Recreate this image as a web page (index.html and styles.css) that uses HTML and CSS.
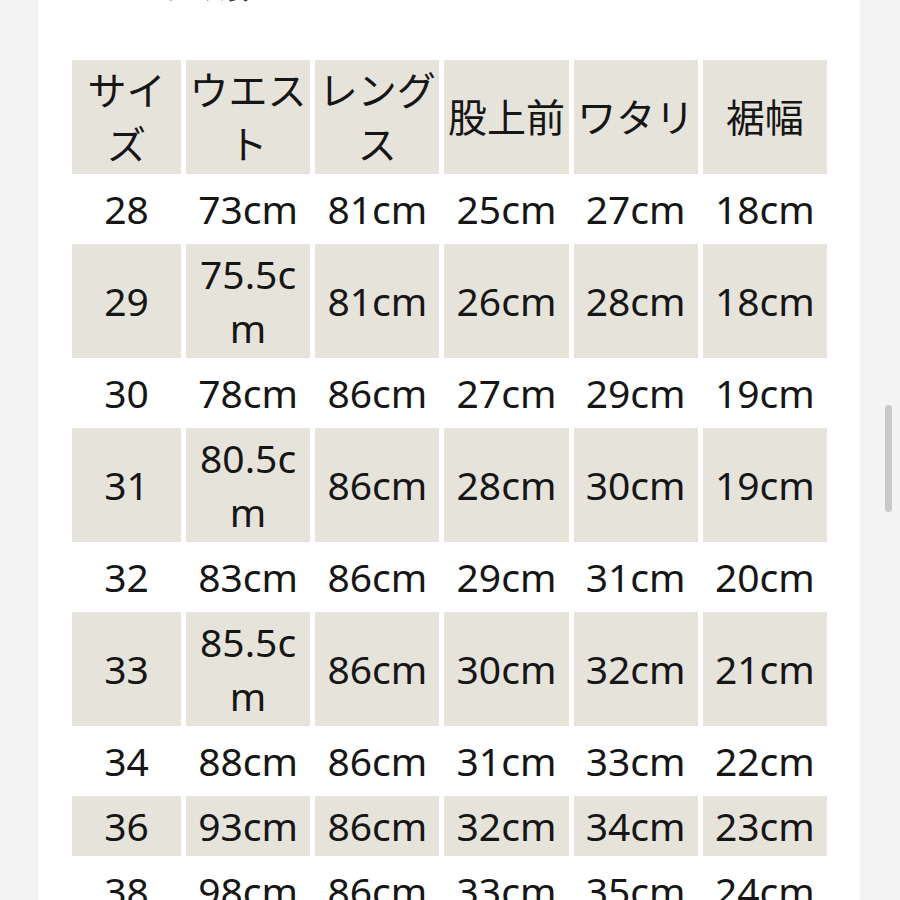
FILE: index.html
```html
<!DOCTYPE html>
<html lang="ja">
<head>
<meta charset="utf-8">
<link rel="stylesheet" href="styles.css">
</head>
<body>
<div class="card">
  <h2 class="heading">サイズ表</h2>
  <table class="size-table">
    <colgroup>
      <col class="col-size">
      <col class="col-wide"><col class="col-wide"><col class="col-wide"><col class="col-wide"><col class="col-wide">
    </colgroup>
    <thead>
      <tr class="shaded"><th>サイズ</th><th>ウエスト</th><th>レングス</th><th>股上前</th><th>ワタリ</th><th>裾幅</th></tr>
    </thead>
    <tbody>
      <tr><td>28</td><td>73cm</td><td>81cm</td><td>25cm</td><td>27cm</td><td>18cm</td></tr>
      <tr class="shaded"><td>29</td><td>75.5cm</td><td>81cm</td><td>26cm</td><td>28cm</td><td>18cm</td></tr>
      <tr><td>30</td><td>78cm</td><td>86cm</td><td>27cm</td><td>29cm</td><td>19cm</td></tr>
      <tr class="shaded"><td>31</td><td>80.5cm</td><td>86cm</td><td>28cm</td><td>30cm</td><td>19cm</td></tr>
      <tr><td>32</td><td>83cm</td><td>86cm</td><td>29cm</td><td>31cm</td><td>20cm</td></tr>
      <tr class="shaded"><td>33</td><td>85.5cm</td><td>86cm</td><td>30cm</td><td>32cm</td><td>21cm</td></tr>
      <tr><td>34</td><td>88cm</td><td>86cm</td><td>31cm</td><td>33cm</td><td>22cm</td></tr>
      <tr class="shaded"><td>36</td><td>93cm</td><td>86cm</td><td>32cm</td><td>34cm</td><td>23cm</td></tr>
      <tr><td>38</td><td>98cm</td><td>86cm</td><td>33cm</td><td>35cm</td><td>24cm</td></tr>
    </tbody>
  </table>
</div>
<div class="scroll-thumb"></div>
</body>
</html>
```
FILE: styles.css
```css
html, body {
  margin: 0;
  padding: 0;
  height: 100%;
  overflow: hidden;
}
body {
  background: #f4f4f4;
  font-family: "Noto Sans", "Noto Sans CJK JP", sans-serif;
  color: #161616;
}
.card {
  margin-left: 38px;
  width: 822px;
  min-height: 100%;
  background: #ffffff;
  box-shadow: -4px 0 6px rgba(0, 0, 0, 0.015), 4px 0 6px rgba(0, 0, 0, 0.015);
  padding-left: 29px;
  box-sizing: border-box;
}
.heading {
  margin: -21px 0 54px 0;
  padding-left: 94px;
  font-size: 22px;
  line-height: 22px;
  font-weight: normal;
  color: #333;
}
.size-table {
  border-collapse: separate;
  border-spacing: 5px 5.5px;
  table-layout: fixed;
  width: 765px;
  font-size: 39px;
  line-height: 54px;
}
.col-size { width: 109px; }
.col-wide { width: 124.2px; }
.size-table th,
.size-table td {
  padding: 3px 1px;
  text-align: center;
  vertical-align: middle;
  font-weight: normal;
  word-break: break-all;
}
.shaded th,
.shaded td {
  background: #e6e3da;
}
.scroll-thumb {
  position: fixed;
  top: 405px;
  right: 8px;
  width: 7px;
  height: 107px;
  border-radius: 4px;
  background: #c9c9c9;
}
```
